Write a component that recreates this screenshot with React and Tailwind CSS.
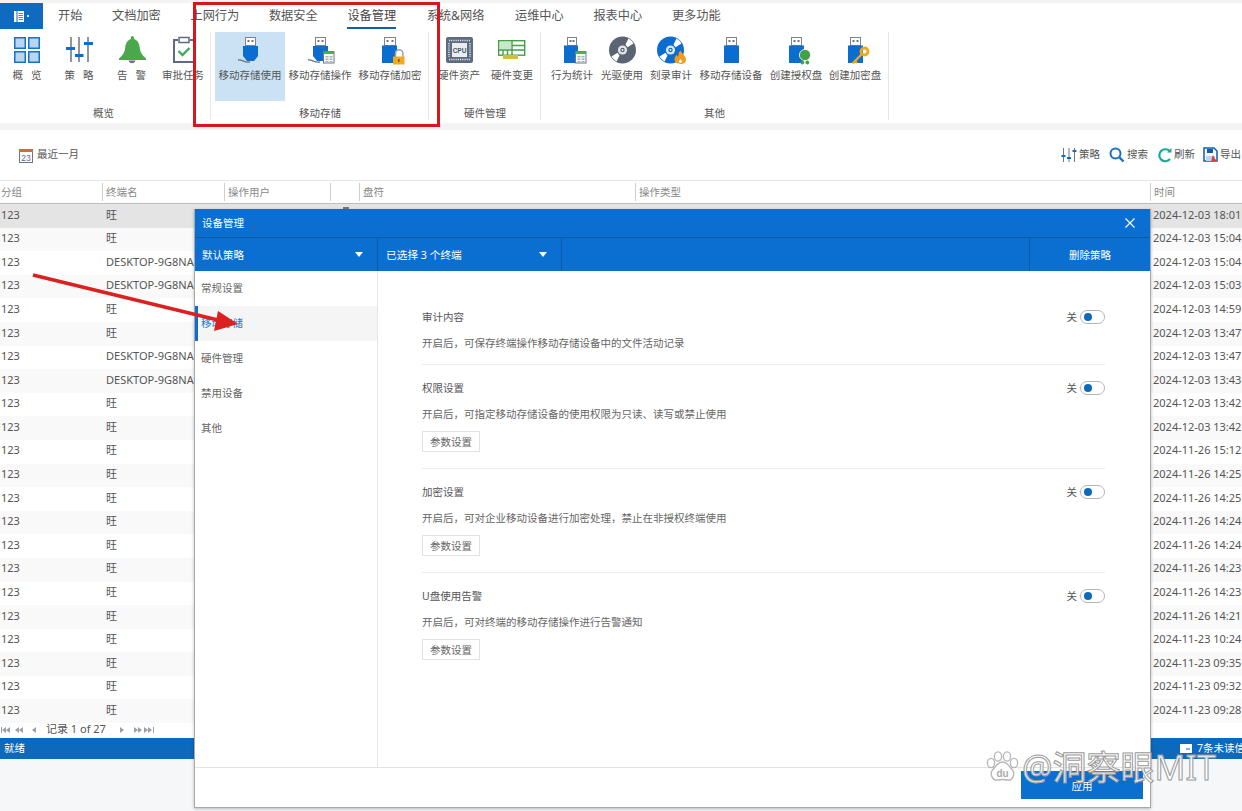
import React from "react";

const FONT = "font-['Noto_Sans','Noto_Sans_CJK_SC',sans-serif]";

function Overlay({ kind, x = 19 }) {
  if (kind === "table")
    return (
      <g transform={`translate(${x} 16)`}>
        <rect x="0.5" y="0.5" width="10.5" height="11.5" fill="#fff" stroke="#6b7785" />
        <rect x="0.5" y="0.5" width="10.5" height="2.5" fill="#4caf50" />
        <path d="M2.5 5h3v1.4h-3zM6.5 5h3v1.4h-3zM2.5 7.5h3v1.4h-3zM6.5 7.5h3v1.4h-3zM2.5 10h3v1h-3zM6.5 10h3v1h-3z" fill="#a8b0ba" />
      </g>
    );
  if (kind === "lock")
    return (
      <g>
        <path d="M21.5 22v-3.5a3.7 3.7 0 0 1 7.400 0V22" fill="#fff" stroke="#9aa1a9" strokeWidth="1.5" />
        <rect x="19" y="21.500" width="11.500" height="8" fill="#f2a91e" />
        <rect x="24.100" y="24" width="1.400" height="3" fill="#7a5510" />
      </g>
    );
  if (kind === "medal")
    return (
      <g fill="#43a047">
        <circle cx="25" cy="20" r="5.600" stroke="#fff" strokeWidth="0.8" />
        <circle cx="22.300" cy="27.500" r="1.900" />
        <circle cx="27.300" cy="27.500" r="1.900" />
      </g>
    );
  if (kind === "key")
    return (
      <g fill="none" stroke="#f0a61d">
        <circle cx="25.500" cy="16.500" r="3.500" strokeWidth="2.800" />
        <path d="M23 19 13.500 28.500M16 26l2 2" strokeWidth="2.400" />
      </g>
    );
  return null;
}

function Usb({ taper, overlay, hx = 11, hw = 11, bx = 9, bw = 15, cable }) {
  return (
    <svg width="32" height="32" viewBox="0 0 32 32">
      <rect x={hx + 0.5} y="2.5" width={hw - 1} height="8" fill="#fff" stroke="#7c848e" />
      <rect x={hx + 2.5} y="5" width="2" height="2" fill="#6f7780" />
      <rect x={hx + hw - 4.5} y="5" width="2" height="2" fill="#6f7780" />
      {taper ? (
        <path d={`M${bx} 11h${bw}v10l-4 5h-7l-4-5z`} fill="#0a6dcf" />
      ) : (
        <rect x={bx} y="10.5" width={bw} height="17.5" fill="#0a6dcf" />
      )}
      {cable && <path d="M4 25c4-1 6 3 12 2" fill="none" stroke="#6b7280" strokeWidth="1.4" />}
      <Overlay kind={overlay} />
    </svg>
  );
}

function Disc({ color, flame }) {
  const c = flame ? 15.5 : 16.5;
  return (
    <svg width="32" height="32" viewBox="0 0 32 32">
      <circle cx={c} cy="15" r="13.5" fill={color} />
      <path
        d={`M${c + 3} 9.5 ${c + 6} 3.5a13 13 0 0 1 5 5l-6 3.8zM${c - 3} 20.5 ${c - 6} 26.5a13 13 0 0 1-5-5l6-3.8z`}
        fill="#fff"
      />
      <circle cx={c} cy="15" r="4.6" fill="#dfe6ee" />
      <circle cx={c} cy="15" r="2.2" fill={color} />
      <circle cx={c} cy="15" r="0.9" fill="#fff" />
      {flame && (
        <g>
          <path d="M25.500 15.500c1 3 5.500 5.500 5.500 9 0 2.800-2.200 4.500-5.500 4.500s-6-1.700-6-4.700c0-2 1-3.300 2.200-4.500.2 1 .7 1.700 1.400 2 .6-2 0-4.300 2.400-6.300z" fill="#f39a1f" />
          <path d="M25.500 24c.5 1 1.500 1.500 1.500 2.600 0 .9-.7 1.400-1.600 1.400s-1.600-.5-1.600-1.400c0-1.100 1.300-1.500 1.700-2.600z" fill="#fff" />
        </g>
      )}
    </svg>
  );
}

const Grid4 = () => (
  <svg width="32" height="32" viewBox="0 0 32 32">
    {[[3, 2], [17, 2], [3, 16], [17, 16]].map(([x, y]) => (
      <g key={`${x}-${y}`}>
        <rect x={x + 0.75} y={y + 0.75} width="10.500" height="10.500" fill="#b9d5ef" stroke="#1473cc" strokeWidth="1.500" />
      </g>
    ))}
  </svg>
);

const Sliders = () => (
  <svg width="32" height="32" viewBox="0 0 32 32">
    <path d="M8 2v25M16 2v25M25 2v25" stroke="#5f6b7a" strokeWidth="1.400" />
    <rect x="3" y="12" width="9" height="3" fill="#0a6dcf" />
    <rect x="12" y="19" width="8.500" height="3" fill="#0a6dcf" />
    <rect x="21" y="7" width="9" height="3" fill="#0a6dcf" />
  </svg>
);

const Bell = () => (
  <svg width="32" height="32" viewBox="0 0 32 32">
    <path d="M16 1a2.200 2.200 0 0 1 2 3c4 1.300 5.500 5 5.800 9 .3 4 2.700 7.500 6.200 10.500v1.500H3v-1.500C6.500 20.500 8.900 17 9.200 13c.3-4 1.800-7.700 5.800-9a2.200 2.200 0 0 1 1-3z" fill="#4aa84c" />
    <path d="M12.500 25.500h7c-.5 1.800-1.800 2.700-3.500 2.700s-3-.9-3.500-2.700z" fill="#6b7280" />
  </svg>
);

const Clipboard = () => (
  <svg width="32" height="32" viewBox="0 0 32 32">
    <path d="M11 5H7v22h20V5h-4" fill="#fff" stroke="#5d6b80" strokeWidth="2" />
    <rect x="12" y="2.500" width="10" height="5" fill="#fff" stroke="#5d6b80" strokeWidth="1.500" />
    <path d="m11.500 16 4 4 7-7" fill="none" stroke="#43a85a" strokeWidth="2.400" />
  </svg>
);

const Cpu = () => (
  <svg width="32" height="32" viewBox="0 0 32 32">
    <rect x="3" y="2" width="27" height="26" rx="2" fill="#5d6b80" />
    <rect x="9" y="8" width="15" height="14" fill="#e9ecf0" />
    <path d="M6 5.500h21M6 24.500h21M6 8v14M27 8v14" stroke="#dfe3e8" strokeWidth="1.500" strokeDasharray="1.200 1" />
    <text x="16.500" y="17.500" textAnchor="middle" fontSize="6.500" fontWeight="700" fill="#4a5666" fontFamily="Liberation Sans, sans-serif">CPU</text>
  </svg>
);

const Board = () => (
  <svg width="32" height="32" viewBox="0 0 32 32">
    <rect x="2.700" y="5.700" width="26" height="14.500" fill="#fff" stroke="#43a047" strokeWidth="1.400" />
    <path d="M16 6v14M16 10.500h13M16 15h13M3 15h13M7 15v5M11.500 15v5" stroke="#43a047" strokeWidth="1.400" />
    <rect x="4" y="7" width="11" height="7" fill="#c9e8ca" />
    <rect x="7" y="20" width="15" height="4" fill="#d6bd3a" />
  </svg>
);

const tabs = ["开始", "文档加密", "上网行为", "数据安全", "设备管理", "系统&网络", "运维中心", "报表中心", "更多功能"];

const groups = [
  {
    label: "概览",
    className: "w-[211px] pl-px",
    labelClass: "pr-[5px]",
    items: [
      { t: "概   览", w: "w-[52px]", i: <Grid4 /> },
      { t: "策   略", w: "w-[52px]", i: <Sliders /> },
      { t: "告   警", w: "w-[53px]", i: <Bell /> },
      { t: "审批任务", w: "w-[48px] pl-[2px]", i: <Clipboard /> },
    ],
  },
  {
    label: "移动存储",
    className: "w-[218px] pl-[4px]",
    labelClass: "pr-[4px]",
    items: [
      { t: "移动存储使用", w: "w-[70px]", active: true, i: <Usb taper cable /> },
      { t: "移动存储操作", w: "w-[70px]", i: <Usb taper cable overlay="table" /> },
      { t: "移动存储加密", w: "w-[70px]", i: <Usb hx={10} hw={12} bx={8} bw={15} overlay="lock" /> },
    ],
  },
  {
    label: "硬件管理",
    className: "w-[112px] pl-[4px]",
    labelClass: "pr-[4px]",
    items: [
      { t: "硬件资产", w: "w-[52px]", i: <Cpu /> },
      { t: "硬件变更", w: "w-[54px]", i: <Board /> },
    ],
  },
  {
    label: "其他",
    className: "w-[348px] pl-[5px]",
    labelClass: "pr-[6px]",
    items: [
      { t: "行为统计", w: "w-[52px]", i: <Usb hx={11} hw={10} bx={8} bw={14} overlay="table" /> },
      { t: "光驱使用", w: "w-[48px]", i: <Disc color="#5b6472" /> },
      { t: "刻录审计", w: "w-[50px]", i: <Disc color="#0a6dcf" flame /> },
      { t: "移动存储设备", w: "w-[70px]", i: <Usb /> },
      { t: "创建授权盘", w: "w-[60px]", i: <Usb overlay="medal" /> },
      { t: "创建加密盘", w: "w-[58px]", i: <Usb overlay="key" /> },
    ],
  },
];

const D = "DESKTOP-9G8NA";
const rows = [
  ["旺", "2024-12-03 18:01"], ["旺", "2024-12-03 15:04"], [D, "2024-12-03 15:04"], [D, "2024-12-03 15:03"],
  ["旺", "2024-12-03 14:59"], ["旺", "2024-12-03 13:47"], [D, "2024-12-03 13:47"], [D, "2024-12-03 13:43"],
  ["旺", "2024-12-03 13:42"], ["旺", "2024-12-03 13:42"], ["旺", "2024-11-26 15:12"], ["旺", "2024-11-26 14:25"],
  ["旺", "2024-11-26 14:25"], ["旺", "2024-11-26 14:24"], ["旺", "2024-11-26 14:24"], ["旺", "2024-11-26 14:23"],
  ["旺", "2024-11-26 14:23"], ["旺", "2024-11-26 14:21"], ["旺", "2024-11-23 10:24"], ["旺", "2024-11-23 09:35"],
  ["旺", "2024-11-23 09:32"], ["旺", "2024-11-23 09:28"],
];

const headers = ["分组", "终端名", "操作用户", "", "盘符", "操作类型", "时间"];
const COLS = "grid grid-cols-[102px_122px_106px_29px_276px_515px_92px]";

const sections = [
  { title: "审计内容", desc: "开启后，可保存终端操作移动存储设备中的文件活动记录", first: true },
  { title: "权限设置", desc: "开启后，可指定移动存储设备的使用权限为只读、读写或禁止使用", btn: true },
  { title: "加密设置", desc: "开启后，可对企业移动设备进行加密处理，禁止在非授权终端使用", btn: true },
  { title: "U盘使用告警", desc: "开启后，可对终端的移动存储操作进行告警通知", btn: true, last: true },
];

const navs = ["常规设置", "移动存储", "硬件管理", "禁用设备", "其他"];

function Caret() {
  return <span className="w-0 h-0 border-l-[4.5px] border-r-[4.5px] border-t-[5px] border-l-transparent border-r-transparent border-t-white" />;
}

function Pager({ flip }) {
  const tri = (x) => (flip ? `M${x} 2l4 3-4 3z` : `M${x + 4} 2l-4 3 4 3z`);
  return (
    <svg width="36" height="10" viewBox="0 0 36 10" fill="#9aa0a6">
      {flip ? (
        <>
          <path d={tri(0)} />
          <path d={tri(14)} />
          <path d={tri(18)} />
          <path d={tri(24)} />
          <path d={tri(28)} />
          <rect x="33" y="2" width="1" height="6" />
        </>
      ) : (
        <>
          <rect x="1" y="2" width="1" height="6" />
          <path d={tri(2)} />
          <path d={tri(6)} />
          <path d={tri(15)} />
          <path d={tri(19)} />
          <path d={tri(32)} />
        </>
      )}
    </svg>
  );
}

function ToolBtn({ icon, label, className }) {
  return (
    <div className={`flex items-center gap-[2px] text-[10.5px] text-[#555] ${className}`}>
      {icon}
      <span className="whitespace-nowrap">{label}</span>
    </div>
  );
}

export default function App() {
  return (
    <div className={`relative w-[1242px] h-[811px] overflow-hidden bg-[#f6f7f9] text-[#555] ${FONT}`}>
      <div className="h-[3px] bg-[#f3f3f3]" />
      {/* tabs */}
      <div className="flex h-[26px] bg-white">
        <div className="flex w-[43px] items-center justify-center gap-[3px] bg-[#0e6bbf]">
          <svg width="10" height="11" viewBox="0 0 10 11">
            <rect width="2.500" height="11" fill="#fff" />
            <rect x="3.500" width="6.500" height="11" fill="#fff" />
            <path d="M4.500 2.500h4.500M4.500 4.500h4.500M4.500 6.500h4.500M4.500 8.500h4.500" stroke="#0e6bbf" strokeWidth="0.800" />
          </svg>
          <span className="h-[2px] w-[2px] bg-white/80" />
        </div>
        <div className="ml-[15px] flex gap-[29.7px]">
          {tabs.map((t) => (
            <div
              key={t}
              className={`flex h-full items-center justify-center whitespace-nowrap border-b-2 pt-[2px] text-[12.2px] ${t === "系统&网络" ? "w-[59.5px]" : ""} ${t === "设备管理" ? "border-[#0e5fb0] text-[#444]" : "border-transparent text-[#555]"}`}
            >
              {t}
            </div>
          ))}
        </div>
      </div>
      {/* ribbon */}
      <div className="flex h-[94px] bg-white">
        {groups.map((g) => (
          <div key={g.label} className={`relative flex h-full flex-col justify-between pb-[3px] pt-[3px] ${g.className}`}>
            <div className="flex">
              {g.items.map((it) => (
                <div key={it.t} className={`flex h-[69px] flex-col items-center pt-[3px] ${it.w} ${it.active ? "bg-[#cbe2f5]" : ""}`}>
                  {it.i}
                  <span className="mt-px whitespace-pre text-[10.5px] leading-[14px] text-[#555]">{it.t}</span>
                </div>
              ))}
            </div>
            <div className={`text-center text-[10.5px] leading-[14px] text-[#555] ${g.labelClass}`}>{g.label}</div>
            <span className="absolute right-0 top-[3px] bottom-[3px] w-px bg-[#e6e6e6]" />
          </div>
        ))}
      </div>
      <div className="h-[7px] bg-[#f3f3f3]" />
      {/* toolbar */}
      <div className="flex h-[50px] items-center justify-between bg-white">
        <div className="ml-[19px] flex items-center gap-[4px] text-[10.5px] text-[#555]">
          <svg width="14" height="15" viewBox="0 0 14 15">
            <rect x="0.500" y="1.500" width="13" height="13" fill="#fff" stroke="#6b7785" />
            <rect x="0" y="1" width="14" height="3" fill="#d8663a" />
            <text x="7" y="12.500" textAnchor="middle" fontSize="8.500" fill="#5d6b80" fontFamily="Liberation Sans, sans-serif">23</text>
          </svg>
          最近一月
        </div>
        <div className="flex items-center">
          <ToolBtn
            className="mr-[9px]"
            label="策略"
            icon={
              <svg width="16" height="16" viewBox="0 0 16 16">
                <path d="M2.500 1v14M8 1v14M13.500 1v14" stroke="#6b7785" />
                <path d="M0.500 9h4M6 11h4M11.500 4h4" stroke="#0a6dcf" strokeWidth="2" />
              </svg>
            }
          />
          <ToolBtn
            className="mr-[9px]"
            label="搜索"
            icon={
              <svg width="16" height="16" viewBox="0 0 16 16" fill="none" stroke="#1a6fc4">
                <circle cx="6.500" cy="6.500" r="5" strokeWidth="2" />
                <path d="m10.500 10.500 4 4" strokeWidth="2.400" />
              </svg>
            }
          />
          <ToolBtn
            className="mr-[8px]"
            label="刷新"
            icon={
              <svg width="15" height="15" viewBox="0 0 15 15" fill="none">
                <path d="M13 3.500A6 6 0 1 0 13 11" stroke="#19a89a" strokeWidth="2.200" />
                <path d="M10 4.500h4.500V0z" fill="#19a89a" />
              </svg>
            }
          />
          <ToolBtn
            className="w-[39px] overflow-hidden"
            label="导出"
            icon={
              <svg className="shrink-0" width="15" height="16" viewBox="0 0 15 16">
                <path d="M1 1h10l3 3v10H1z" fill="#fff" stroke="#0a5fb5" strokeWidth="1.500" />
                <rect x="4" y="2" width="6" height="4" fill="#0a5fb5" />
                <rect x="3" y="9" width="9" height="5" fill="#b9d5ef" />
                <path d="M8 15c1-3 1-6 2-7 1 2 2 5 5 6-3 0-5 0-7 1z" fill="#d8452e" />
              </svg>
            }
          />
        </div>
      </div>
      {/* table */}
      <div className={`${COLS} h-[24px] border-y border-t-[#e6e6e6] border-b-[#bdbdbd] bg-white text-[10.5px] text-[#888]`}>
        {headers.map((h, i) => (
          <div key={i} className={`flex items-center whitespace-nowrap ${i === 0 ? "pl-px" : "pl-[4px]"}`}>
            {i > 0 && <span className="-ml-[4px] mr-[3px] h-[18px] w-px bg-[#cfcfcf]" />}
            <span className="pt-[2px]">{h}</span>
          </div>
        ))}
      </div>
      <div className="h-[519px] overflow-hidden">
        {rows.map(([name, time], i) => (
          <div
            key={i}
            className={`${COLS} h-[23.6px] items-center pb-[2px] text-[11px] text-[#555] ${i === 0 ? "bg-[#e4e4e4]" : i % 2 === 1 ? "bg-[#f9f9f9]" : "bg-white"}`}
          >
            <div className="pl-px">123</div>
            <div className="whitespace-nowrap pl-[4px]">{name}</div>
            <div />
            <div className="h-full pl-[13px] pt-[3px]">
              {i === 0 && <div className="h-[3px] w-[6px] bg-[#777]" />}
            </div>
            <div />
            <div />
            <div className="whitespace-nowrap pl-[3px]">{time}</div>
          </div>
        ))}
      </div>
      {/* pager */}
      <div className="flex h-[15px] items-center bg-white pb-[2px] text-[11px] text-[#555]">
        <Pager />
        <span className="ml-[10px] whitespace-nowrap">记录 1 of 27</span>
        <span className="ml-[14px]">
          <Pager flip />
        </span>
      </div>
      {/* status */}
      <div className="flex h-[21px] items-center justify-between bg-[#0c69bd] text-[10.5px] text-white">
        <span className="pl-[4px]">就绪</span>
        <span className="flex w-[62px] items-center gap-[5px] overflow-hidden whitespace-nowrap">
          <svg className="shrink-0" width="12" height="9" viewBox="0 0 12 9">
            <rect width="12" height="9" fill="#fff" />
            <path d="M6 5h4" stroke="#0c69bd" />
          </svg>
          7条未读信
        </span>
      </div>

      {/* dialog */}
      <div className="absolute left-[194px] top-[209px] flex h-[599px] w-[957px] flex-col border-r border-b border-l border-[#a9a9a9] bg-white shadow-[0_1px_3px_rgba(0,0,0,0.25)]">
        <div className="flex h-[28px] items-center justify-between bg-[#0a6fd1] pl-[7px] pr-[15px] pt-[2px] text-[10.5px] text-white">
          <span>设备管理</span>
          <svg className="-mt-[2px]" width="10" height="10" viewBox="0 0 10 10" stroke="#fff" strokeWidth="1.100">
            <path d="m.5.5 9 9M9.500.5l-9 9" />
          </svg>
        </div>
        <div className="flex h-[34px] border-t border-[#0a5aa8] bg-[#0a6fd1] text-[10.5px] text-white">
          <div className="flex w-[183px] items-center justify-between border-r border-[#0a5aa8] pl-[7px] pr-[14px]">
            <span className="pt-[2px]">默认策略</span>
            <Caret />
          </div>
          <div className="flex w-[184px] items-center justify-between border-r border-[#0a5aa8] pl-[8px] pr-[14px]">
            <span className="pt-[2px] text-[10.7px]">已选择 3 个终端</span>
            <Caret />
          </div>
          <div className="w-[468px] border-r border-[#0a5aa8]" />
          <div className="flex flex-1 items-center justify-center pt-[2px]">删除策略</div>
        </div>
        <div className="flex min-h-0 flex-1">
          <div className="w-[183px] border-r border-[#e6e6e6] text-[10.5px] text-[#666]">
            {navs.map((n, i) => (
              <div
                key={n}
                className={`flex h-[35px] items-center ${i === 1 ? "border-l-[3px] border-[#0a6fd1] bg-[#f5f5f5] pl-[3px] text-[#1a78d2]" : "pl-[6px]"}`}
              >
                {n}
              </div>
            ))}
          </div>
          <div className="flex-1 pl-[44px] pr-[45px] pt-[35px]">
            {sections.map((s) => (
              <div
                key={s.title}
                className={`${s.first ? "pb-[10px]" : "pb-[16px] pt-[12px]"} ${s.last ? "" : "border-b border-[#ececec]"}`}
              >
                <div className="flex h-[22px] items-center justify-between text-[10.5px] text-[#555]">
                  <span className="pt-[2px]">{s.title}</span>
                  <span className="flex items-center gap-[3px]">
                    <span className="pt-[2px]">关</span>
                    <span className="flex h-[14px] w-[25px] items-center rounded-full border border-[#b5b5b5] pl-[3px]">
                      <span className="h-[8px] w-[8px] rounded-full bg-[#0c69bd]" />
                    </span>
                  </span>
                </div>
                <div className="mt-[4px] flex h-[22px] items-center pt-[2px] text-[10.5px] text-[#666]">{s.desc}</div>
                {s.btn && (
                  <div className="mt-[6px] flex h-[21px] w-[58px] items-center justify-center border border-[#e2e2e2] pt-[2px] text-[10.5px] text-[#666]">
                    参数设置
                  </div>
                )}
              </div>
            ))}
          </div>
        </div>
        <div className="flex h-[40px] justify-end border-t border-[#e2e2e2] pr-[7px] pt-[3px]">
          <div className="flex h-[28px] w-[122px] items-center justify-center bg-[#0a6fd1] pt-[4px] text-[10.5px] text-white">应用</div>
        </div>
      </div>

      {/* red annotation */}
      <div className="absolute left-[193px] top-[2px] h-[125px] w-[247px] border-[3px] border-[#d9161c]" />
      <svg className="absolute left-0 top-0" width="300" height="350" viewBox="0 0 300 350">
        <path d="M33 275 222 321" stroke="#dc1f1f" strokeWidth="3.500" />
        <path d="M218 311 238 324 214 331z" fill="#dc1f1f" />
      </svg>

      {/* watermark */}
      <div className="absolute left-[986px] top-[749px] flex items-center gap-[3px]">
        <svg width="33" height="32" viewBox="0 0 33 32" fill="#fff" stroke="#b5b5b5" strokeWidth="1.300">
          <ellipse cx="5" cy="12" rx="3.600" ry="4.600" />
          <ellipse cx="12" cy="5.500" rx="3.600" ry="4.600" />
          <ellipse cx="21" cy="5.500" rx="3.600" ry="4.600" />
          <ellipse cx="28" cy="12" rx="3.600" ry="4.600" />
          <path d="M16.500 11c5 0 7 5 10 8 3 4 0 11-5 10-3-.6-7-.6-10 0-5 1-8-6-5-10 3-3 5-8 10-8z" />
          <text x="16.500" y="26" textAnchor="middle" fontSize="10" fill="#aaa" stroke="none" fontWeight="700" fontFamily="Liberation Sans, sans-serif">du</text>
        </svg>
        <span className="whitespace-nowrap text-[34px] leading-[36px] text-white/85 [-webkit-text-stroke:1px_#9a9a9a]">@洞察眼MIT</span>
      </div>
    </div>
  );
}
